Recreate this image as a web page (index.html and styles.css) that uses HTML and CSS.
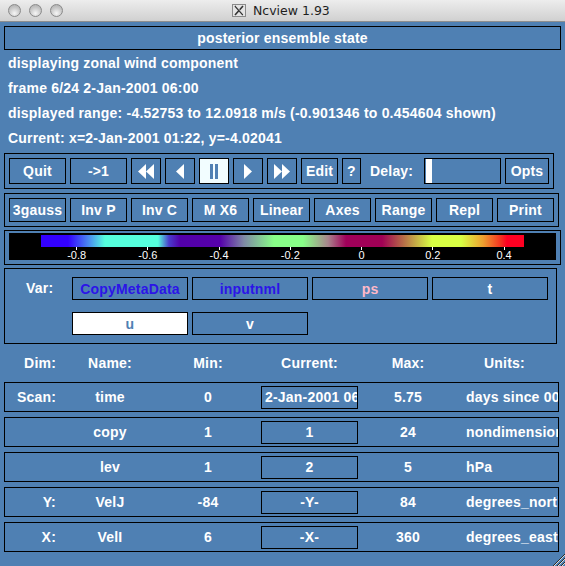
FILE: index.html
```html
<!DOCTYPE html>
<html>
<head>
<meta charset="utf-8">
<title>Ncview 1.93</title>
<link rel="stylesheet" href="styles.css">
</head>
<body>
<div class="titlebar">
  <div class="lights"><span class="light"></span><span class="light"></span><span class="light"></span></div>
  <div class="title">
    <svg class="xicon" width="14" height="13" viewBox="0 0 14 13"><rect x="0.5" y="0.5" width="13" height="12" fill="#e4e4e4" stroke="#8a8a8a"/><path d="M3 2 L11 11 M11 2 L3 11" stroke="#333" stroke-width="1.6"/><path d="M4 2 L12 11" stroke="#fff" stroke-width="0.6"/></svg>
    <span>Ncview 1.93</span>
  </div>
</div>
<div class="content">
  <div class="headbox">posterior ensemble state</div>
  <div class="info">
    <div class="line">displaying zonal wind component</div>
    <div class="line">frame 6/24 2-Jan-2001 06:00</div>
    <div class="line">displayed range: -4.52753 to 12.0918 m/s (-0.901346 to 0.454604 shown)</div>
    <div class="line">Current: x=2-Jan-2001 01:22, y=-4.02041</div>
  </div>
  <div class="box row1">
    <div class="btn w57">Quit</div>
    <div class="btn w57">-&gt;1</div>
    <div class="btn w30"><svg width="16" height="15" viewBox="0 0 16 15"><polygon points="8,0 0,7.5 8,15" fill="#fff"/><polygon points="16,0 8,7.5 16,15" fill="#fff"/></svg></div>
    <div class="btn w30"><svg width="8" height="15" viewBox="0 0 8 15"><polygon points="8,0 0,7.5 8,15" fill="#fff"/></svg></div>
    <div class="btn w30 on"><svg width="8" height="15" viewBox="0 0 8 15"><rect x="0" y="0" width="3" height="15" class="pbar"/><rect x="5" y="0" width="3" height="15" class="pbar"/></svg></div>
    <div class="btn w30"><svg width="8" height="15" viewBox="0 0 8 15"><polygon points="0,0 8,7.5 0,15" fill="#fff"/></svg></div>
    <div class="btn w30"><svg width="16" height="15" viewBox="0 0 16 15"><polygon points="0,0 8,7.5 0,15" fill="#fff"/><polygon points="8,0 16,7.5 8,15" fill="#fff"/></svg></div>
    <div class="btn w37">Edit</div>
    <div class="btn w19">?</div>
    <div class="delay-label">Delay:</div>
    <div class="delay-field"><div class="knob"></div></div>
    <div class="btn w44">Opts</div>
  </div>
  <div class="box row2">
    <div class="btn b2">3gauss</div>
    <div class="btn b2">Inv P</div>
    <div class="btn b2">Inv C</div>
    <div class="btn b2">M X6</div>
    <div class="btn b2">Linear</div>
    <div class="btn b2">Axes</div>
    <div class="btn b2">Range</div>
    <div class="btn b2">Repl</div>
    <div class="btn b2">Print</div>
  </div>
  <div class="box cbar">
    <div class="bar">
      <div class="grad"></div>
      <div class="scale">
        <div class="tcell">-0.8</div>
        <div class="tcell">-0.6</div>
        <div class="tcell">-0.4</div>
        <div class="tcell">-0.2</div>
        <div class="tcell">0</div>
        <div class="tcell">0.2</div>
        <div class="tcell">0.4</div>
      </div>
    </div>
  </div>
  <div class="box varbox">
    <div class="varlabel">Var:</div>
    <div class="vargrid">
      <div class="vbtn blue">CopyMetaData</div>
      <div class="vbtn blue">inputnml</div>
      <div class="vbtn pink">ps</div>
      <div class="vbtn">t</div>
      <div class="vbtn sel">u</div>
      <div class="vbtn">v</div>
    </div>
  </div>
  <div class="dimhead">
    <div class="c-dim">Dim:</div>
    <div class="c-name">Name:</div>
    <div class="c-min">Min:</div>
    <div class="c-curh">Current:</div>
    <div class="c-max">Max:</div>
    <div class="c-unitsh">Units:</div>
  </div>
  <div class="box dimrow">
    <div class="c-dim">Scan:</div>
    <div class="c-name">time</div>
    <div class="c-min">0</div>
    <div class="c-cur left">2-Jan-2001 06:00</div>
    <div class="c-max">5.75</div>
    <div class="c-units">days since 0000-01-01</div>
  </div>
  <div class="box dimrow">
    <div class="c-dim"></div>
    <div class="c-name">copy</div>
    <div class="c-min">1</div>
    <div class="c-cur">1</div>
    <div class="c-max">24</div>
    <div class="c-units">nondimensional</div>
  </div>
  <div class="box dimrow">
    <div class="c-dim"></div>
    <div class="c-name">lev</div>
    <div class="c-min">1</div>
    <div class="c-cur">2</div>
    <div class="c-max">5</div>
    <div class="c-units">hPa</div>
  </div>
  <div class="box dimrow">
    <div class="c-dim">Y:</div>
    <div class="c-name">VelJ</div>
    <div class="c-min">-84</div>
    <div class="c-cur">-Y-</div>
    <div class="c-max">84</div>
    <div class="c-units">degrees_north</div>
  </div>
  <div class="box dimrow">
    <div class="c-dim">X:</div>
    <div class="c-name">VelI</div>
    <div class="c-min">6</div>
    <div class="c-cur">-X-</div>
    <div class="c-max">360</div>
    <div class="c-units">degrees_east</div>
  </div>
</div>
<svg class="grip" width="13" height="13" viewBox="0 0 13 13">
  <path d="M13 1 L1 13 M13 5 L5 13 M13 9 L9 13" stroke="#2a2a2a" stroke-width="1"/>
  <path d="M13 2 L2 13 M13 6 L6 13 M13 10 L10 13" stroke="#d8d8d8" stroke-width="1"/>
</svg>
</body>
</html>
```
FILE: styles.css
```css
html, body {
  margin: 0;
  padding: 0;
}
body {
  width: 565px;
  height: 566px;
  overflow: hidden;
  position: relative;
  background: #4f80b3;
  color: #fff;
  font-family: "Liberation Sans", Arial, sans-serif;
  font-weight: bold;
  font-size: 14px;
  letter-spacing: 0.2px;
}

/* window title bar */
.titlebar {
  height: 22px;
  box-sizing: border-box;
  border-bottom: 1px solid #8e8e8e;
  background: linear-gradient(#ededed, #d0d0d0);
  display: flex;
  align-items: center;
}
.lights {
  display: flex;
  gap: 8px;
  padding-left: 8px;
}
.light {
  width: 13px;
  height: 13px;
  box-sizing: border-box;
  border-radius: 50%;
  border: 1px solid #8a8a8a;
  background: radial-gradient(circle at 50% 75%, #f6f6f6 0%, #c8c8c8 55%, #a8a8a8 100%);
}
.title {
  margin-left: 169px;
  display: flex;
  align-items: center;
  gap: 7px;
  font-family: "Lucida Grande", "DejaVu Sans", sans-serif;
  font-weight: normal;
  font-size: 12.5px;
  letter-spacing: 0;
  color: #1e1e1e;
}
.xicon {
  display: block;
}

/* main area */
.content {
  padding: 4px 0 0 4px;
}
.box {
  box-sizing: border-box;
  border: 1px solid #000;
}
.headbox {
  width: 557px;
  height: 24px;
  box-sizing: border-box;
  border: 1px solid #000;
  text-align: center;
  line-height: 22px;
}
.info {
  padding-top: 1px;
}
.line {
  height: 25px;
  line-height: 25px;
  padding-left: 4px;
  white-space: nowrap;
}

/* button rows */
.row1 {
  width: 550px;
  height: 36px;
  margin-top: 2px;
  padding: 4px;
  display: flex;
  gap: 4px;
}
.btn {
  box-sizing: border-box;
  border: 1px solid #000;
  height: 26px;
  flex: none;
  display: flex;
  align-items: center;
  justify-content: center;
  white-space: nowrap;
  overflow: hidden;
}
.btn svg {
  display: block;
}
.w57 { width: 57px; }
.w30 { width: 30px; }
.w37 { width: 37px; }
.w19 { width: 19px; }
.w44 { width: 44px; }
.on {
  background: #f2fdff;
}
.pbar {
  fill: #4f80b3;
}
.delay-label {
  width: 50px;
  margin-left: 5px;
  flex: none;
  display: flex;
  align-items: center;
}
.delay-field {
  width: 77px;
  height: 26px;
  box-sizing: border-box;
  border: 1px solid #000;
  flex: none;
}
.knob {
  width: 6px;
  height: 100%;
  margin-left: 1px;
  background: #fff;
}
.row2 {
  width: 555px;
  height: 34px;
  margin-top: 4px;
  padding: 4px;
  display: flex;
  gap: 4px;
}
.b2 {
  width: 57px;
  height: 24px;
}

/* colour bar */
.cbar {
  width: 557px;
  height: 35px;
  margin-top: 3px;
  padding: 2px 4px;
}
.bar {
  height: 27px;
  box-sizing: border-box;
  padding: 2px 0 0 32px;
  background: #000;
}
.grad {
  width: 483px;
  height: 12px;
  background: linear-gradient(to right,
    #3300ff 0px, #3300ff 27px, #4a8cf0 48px, #55ffdd 64px,
    #55ffdd 117px, #4a3ccc 128px, #5200aa 139px, #5600aa 179px,
    #7f8aa6 203px, #88ff88 233px, #88ff88 262px, #a8858c 287px,
    #a0005a 305px, #a00055 341px, #b46048 360px, #d8ff44 391px,
    #d8ff44 420px, #eea030 442px, #f43020 460px, #ff0022 466px, #ff0022 483px);
}
.scale {
  display: flex;
}
.tcell {
  width: 71.24px;
  flex: none;
  text-align: center;
  font-weight: normal;
  font-size: 11px;
  line-height: 10px;
  letter-spacing: 0;
}
.tcell::before {
  content: "";
  display: block;
  width: 1px;
  height: 3px;
  margin: 0 auto;
  background: #fff;
}

/* variable selector */
.varbox {
  width: 553px;
  height: 76px;
  margin-top: 3px;
  padding-top: 8px;
  display: flex;
}
.varlabel {
  width: 67px;
  box-sizing: border-box;
  padding-left: 21px;
  height: 23px;
  line-height: 23px;
  flex: none;
}
.vargrid {
  display: grid;
  grid-template-columns: repeat(4, 116px);
  column-gap: 4px;
  row-gap: 12px;
  align-content: start;
}
.vbtn {
  height: 23px;
  box-sizing: border-box;
  border: 1px solid #000;
  display: flex;
  align-items: center;
  justify-content: center;
}
.blue { color: #2b14e8; }
.pink { color: #ffb9c8; }
.sel {
  background: #fff;
  color: #4f80b3;
}

/* dimension table */
.dimhead {
  height: 38px;
  display: flex;
  align-items: center;
  padding-left: 1px;
}
.dimrow {
  width: 555px;
  height: 30px;
  margin-bottom: 5px;
  display: flex;
  align-items: center;
}
.c-dim {
  width: 51px;
  flex: none;
  text-align: right;
}
.c-name {
  width: 108px;
  flex: none;
  text-align: center;
}
.c-min {
  width: 88px;
  flex: none;
  text-align: center;
}
.c-curh {
  width: 97px;
  margin-left: 9px;
  flex: none;
  text-align: center;
}
.c-cur {
  width: 97px;
  height: 23px;
  margin-left: 9px;
  flex: none;
  box-sizing: border-box;
  border: 1px solid #000;
  line-height: 21px;
  text-align: center;
  white-space: nowrap;
  overflow: hidden;
}
.c-cur.left {
  text-align: left;
  padding-left: 3px;
}
.c-max {
  width: 100px;
  flex: none;
  text-align: center;
}
.c-units {
  margin-left: 8px;
  flex: 1;
  min-width: 0;
  white-space: nowrap;
  overflow: hidden;
}
.c-unitsh {
  margin-left: 26px;
  flex: none;
}

.grip {
  position: absolute;
  right: 0;
  bottom: 0;
  display: block;
}
```
